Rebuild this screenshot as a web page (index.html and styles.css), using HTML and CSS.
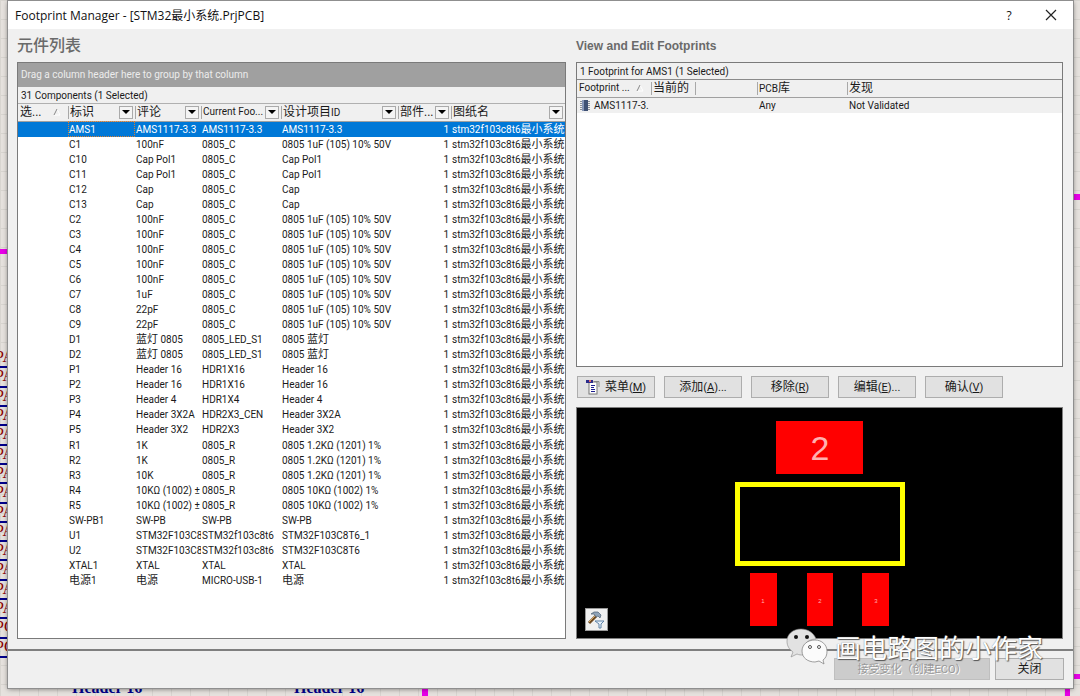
FILE: index.html
```html
<!DOCTYPE html>
<html lang="zh-CN">
<head>
    <meta charset="UTF-8">
    <meta name="viewport" content="width=device-width, initial-scale=1.0">
    <title>Footprint Manager</title>
    <link rel="stylesheet" href="styles.css">
</head>
<body>
    <!-- schematic sheet behind the dialog -->
    <div class="sheet" aria-hidden="true">
        <div class="wire wire-left"></div>
        <div class="wire wire-right"></div>
        <div class="wire wire-right-low"></div>
        <div class="wire wire-down"></div>
        <div class="wire wire-down-right"></div>
        <div class="nets" id="nets"></div>
        <div class="part part-a">Header 16</div>
        <div class="part part-b">Header 16</div>
    </div>

    <div class="dialog">
        <div class="titlebar">
            <span class="title">Footprint Manager - [STM32最小系统.PrjPCB]</span>
            <button class="title-button" aria-label="Help">?</button>
            <button class="title-button" aria-label="Close">
                <svg width="12" height="12" viewBox="0 0 12 12"><path d="M1 1L11 11M11 1L1 11" stroke="#222" stroke-width="1.2"/></svg>
            </button>
        </div>

        <div class="content">
            <div class="column">
                <h2 class="heading-cn">元件列表</h2>
                <div class="panel">
                    <div class="group-bar">Drag a column header here to group by that column</div>
                    <div class="caption">31 Components (1 Selected)</div>
                    <table class="grid components">
                        <colgroup>
                            <col class="c-sel"><col class="c-des"><col class="c-com"><col class="c-foot"><col class="c-item"><col class="c-part"><col>
                        </colgroup>
                        <thead>
                            <tr>
                                <th><div class="head"><span>选...</span><svg class="sort" width="8" height="8" viewBox="0 0 8 8"><path d="M4 1L7 7H1" fill="none" stroke="#fff"/><path d="M1 7L4 1" stroke="#888"/></svg></div></th>
                                <th><div class="head"><span>标识</span><button class="drop" aria-label="Filter 标识"></button></div></th>
                                <th><div class="head"><span>评论</span><button class="drop" aria-label="Filter 评论"></button></div></th>
                                <th><div class="head"><span class="latin">Current Foo...</span><button class="drop" aria-label="Filter Current Footprint"></button></div></th>
                                <th><div class="head"><span>设计项目<span class="latin">ID</span></span><button class="drop" aria-label="Filter 设计项目ID"></button></div></th>
                                <th><div class="head"><span>部件...</span><button class="drop" aria-label="Filter 部件"></button></div></th>
                                <th><div class="head"><span>图纸名</span><button class="drop" aria-label="Filter 图纸名"></button></div></th>
                            </tr>
                        </thead>
                        <tbody id="components"></tbody>
                    </table>
                </div>
            </div>

            <div class="column">
                <h2 class="heading-en">View and Edit Footprints</h2>
                <div class="panel">
                    <div class="caption caption-line">1 Footprint for AMS1 (1 Selected)</div>
                    <table class="grid footprints">
                        <colgroup>
                            <col class="f-name"><col class="f-cur"><col class="f-gap"><col class="f-lib"><col>
                        </colgroup>
                        <thead>
                            <tr>
                                <th><div class="head"><span class="latin">Footprint ...</span><svg class="sort" width="8" height="8" viewBox="0 0 8 8"><path d="M4 1L7 7H1" fill="none" stroke="#fff"/><path d="M1 7L4 1" stroke="#888"/></svg></div></th>
                                <th>当前的</th>
                                <th></th>
                                <th><span class="latin">PCB</span>库</th>
                                <th>发现</th>
                            </tr>
                        </thead>
                        <tbody>
                            <tr>
                                <td><div class="foot-name"><svg width="12" height="13" viewBox="0 0 12 13"><path d="M1 2.500H11M1 4.500H11M1 6.500H11M1 8.500H11M1 10.500H11" stroke="#8a8f99"/><rect x="3" y="1" width="6" height="11" fill="#3f5174"/><rect x="3" y="1" width="2" height="11" fill="#8797b8"/></svg>AMS1117-3.</div></td>
                                <td></td>
                                <td></td>
                                <td>Any</td>
                                <td>Not Validated</td>
                            </tr>
                        </tbody>
                    </table>
                </div>

                <div class="actions">
                    <button class="button">
                        <svg width="14" height="16" viewBox="0 0 14 16">
                            <rect x="3" y="3" width="8" height="12" fill="#fff" stroke="#777"/>
                            <rect x="0" y="1" width="7" height="3" fill="#2b2b8c"/>
                            <rect x="3" y="1" width="2" height="2" fill="#e06a6a"/>
                            <path d="M8 2.500H13V5M13 5V8" stroke="#888" fill="none"/>
                            <path d="M5 6.500H9M5 8.500H8M5 10.500H9M5 12.500H9" stroke="#1e1e90"/>
                        </svg>
                        <span>菜单<span class="key">(<u>M</u>)</span></span>
                    </button>
                    <button class="button"><span>添加<span class="key">(<u>A</u>)...</span></span></button>
                    <button class="button"><span>移除<span class="key">(<u>R</u>)</span></span></button>
                    <button class="button"><span>编辑<span class="key">(<u>E</u>)...</span></span></button>
                    <button class="button"><span>确认<span class="key">(<u>V</u>)</span></span></button>
                </div>

                <div class="preview">
                    <svg class="footprint" width="170" height="206" viewBox="0 0 170 206">
                        <g fill="#f00">
                            <rect x="41" y="0" width="87" height="53"/>
                            <rect x="15" y="152" width="27" height="53"/>
                            <rect x="72" y="152" width="26" height="53"/>
                            <rect x="127" y="152" width="27" height="53"/>
                        </g>
                        <rect x="2.500" y="63.500" width="165" height="79" fill="none" stroke="#ff0" stroke-width="5"/>
                        <text class="pad-big" x="85" y="39">2</text>
                        <text class="pad" x="28" y="182">1</text>
                        <text class="pad" x="85" y="182">2</text>
                        <text class="pad" x="141" y="182">3</text>
                    </svg>
                    <button class="tool" aria-label="Preview options">
                        <svg width="19" height="19" viewBox="0 0 19 19">
                            <path d="M2 13L9 6" stroke="#6d4a22" stroke-width="3"/>
                            <path d="M2 12L8 6" stroke="#d9a860"/>
                            <path d="M4 4L7 2H11L14 5L13 8L11 6L9 7L7 4Z" fill="#8fa3b8" stroke="#4c6074" stroke-width=".7"/>
                            <path d="M8 11H17L14 14V18H12V14Z" fill="#e8f1fa" stroke="#5f83a8"/>
                        </svg>
                    </button>
                </div>
            </div>
        </div>

        <div class="footer">
            <button class="button apply" disabled>接受变化（创建ECO）</button>
            <button class="button close">关闭</button>
        </div>

        <div class="watermark">
            <svg width="42" height="37" viewBox="0 0 42 37">
                <path d="M15 1C7 1 1 6 1 13C1 18 3 21 7 24L5 29L11 26C13 27 15 27 17 27C15 18 21 11 30 11C28 5 22 1 15 1Z" fill="#e2e2e2" stroke="#888" stroke-width=".6"/>
                <circle cx="10" cy="9" r="2" fill="#111"/><circle cx="21" cy="9" r="2" fill="#111"/>
                <path d="M29 12C21 12 16 17 16 23C16 30 22 34 29 34L33 33L38 36L37 32C40 30 41 27 41 23C41 17 36 12 29 12Z" fill="#fbfbfb" stroke="#888" stroke-width=".8"/>
                <circle cx="24" cy="19" r="1.500" fill="#fff" stroke="#555"/><circle cx="33" cy="19" r="1.500" fill="#fff" stroke="#555"/>
            </svg>
            <span>画电路图的小作家</span>
        </div>
    </div>

    <script src="script.js"></script>
</body>
</html>
```
FILE: styles.css
```css
* {
    box-sizing: border-box;
}
body {
    margin: 0;
    padding: 1px 7px 8px 8px;
    height: 100vh;
    position: relative;
    overflow: hidden;
    font-family: Roboto, "Noto Sans CJK SC", sans-serif;
    font-size: 10px;
    line-height: 15px;
    color: #1a1a1a;
    background-color: #e6e2de;
    background-image: linear-gradient(#d8d5d0 1px, transparent 1px), linear-gradient(90deg, #d8d5d0 1px, transparent 1px);
    background-size: 19px 19px;
}
button {
    font: inherit;
    color: inherit;
    padding: 0;
}

/* sheet */
.wire {
    position: absolute;
    background: #e800e8;
}
.wire-left {
    left: 0;
    top: 249px;
    width: 7px;
    height: 5px;
}
.wire-right {
    right: 0;
    top: 194px;
    width: 8px;
    height: 6px;
}
.wire-right-low {
    right: 0;
    bottom: 17px;
    width: 8px;
    height: 5px;
}
.wire-down {
    left: 422px;
    bottom: 0;
    width: 6px;
    height: 8px;
}
.wire-down-right {
    right: 10px;
    bottom: 0;
    width: 5px;
    height: 8px;
}
.nets {
    position: absolute;
    left: 0;
    top: 349px;
    width: 7px;
    height: 309px;
    display: flex;
    flex-direction: column;
    overflow: hidden;
}
.net {
    flex: 1;
    border-bottom: 2px solid #00008b;
    color: #8b0000;
    font: 16px/16px "Liberation Serif", serif;
    text-indent: -5px;
    white-space: nowrap;
}
.part {
    position: absolute;
    bottom: 0;
    color: #00008b;
    font: bold 16px/16px "Liberation Serif", serif;
}
.part-a {
    left: 72px;
}
.part-b {
    left: 294px;
}

/* dialog */
.dialog {
    position: relative;
    height: 100%;
    display: flex;
    flex-direction: column;
    background: #f0f0f0;
    outline: 1px solid #8f8f8f;
    box-shadow: 0 1px 5px rgba(0, 0, 0, 0.5);
}
.titlebar {
    display: flex;
    align-items: center;
    height: 28px;
    padding: 0 8px 0 7px;
    background: #fff;
    font-family: "Open Sans", "Noto Sans CJK SC", sans-serif;
    font-size: 12px;
    color: #111;
}
.title {
    flex: 1;
}
.title-button {
    display: flex;
    align-items: center;
    justify-content: center;
    width: 28px;
    height: 24px;
    margin-left: 14px;
    border: none;
    background: none;
}
.content {
    flex: 1;
    min-height: 0;
    display: grid;
    grid-template-columns: 549fr 487fr;
    gap: 10px;
    padding: 0 10px 10px 9px;
    border-bottom: 2px solid #7f7f7f;
}
.column {
    display: flex;
    flex-direction: column;
    min-width: 0;
    min-height: 0;
}
h2 {
    margin: 0;
    height: 33px;
    line-height: 34px;
    color: #6a6a6a;
}
.heading-cn {
    font-size: 16px;
    font-weight: 500;
}
.heading-en {
    font-family: "Liberation Sans", sans-serif;
    font-size: 12px;
    font-weight: bold;
}
.panel {
    flex: 1;
    min-height: 0;
    border: 1px solid #7a7a7a;
    background: #fff;
    overflow: hidden;
}
.group-bar {
    height: 24px;
    padding: 0 3px;
    line-height: 24px;
    background: #a0a0a0;
    color: #ececec;
}
.caption {
    height: 17px;
    padding: 0 3px;
    line-height: 17px;
    background: #f0f0f0;
    border-bottom: 1px solid #b0b0b0;
}
.caption-line {
    border-color: #8a8a8a;
}

/* tables */
.grid {
    width: 100%;
    table-layout: fixed;
    border-collapse: collapse;
}
.components {
    height: 484px;
}
.grid th {
    height: 17px;
    padding: 0 2px;
    background: #f0f0f0;
    border-bottom: 1px solid #a0a0a0;
    font-size: 12px;
    font-weight: normal;
    text-align: left;
    white-space: nowrap;
    overflow: hidden;
}
.grid th + th {
    background-image: linear-gradient(#a8a8a8, #a8a8a8);
    background-size: 1px 13px;
    background-position: 0 2px;
    background-repeat: no-repeat;
}
.grid td {
    height: 15px;
    padding: 0 0 0 1px;
    line-height: 15px;
    white-space: nowrap;
    overflow: hidden;
}
.latin {
    font-size: 10px;
}
.han {
    font-size: 11px;
    line-height: 10px;
}
.c-sel {
    width: 50px;
}
.c-des {
    width: 67px;
}
.c-com {
    width: 66px;
}
.c-foot {
    width: 80px;
}
.c-item {
    width: 117px;
}
.c-part {
    width: 53px;
}
.f-name {
    width: 74px;
}
.f-cur {
    width: 44px;
}
.f-gap {
    width: 62px;
}
.f-lib {
    width: 90px;
}
.head {
    display: flex;
    align-items: center;
    justify-content: space-between;
    height: 16px;
    line-height: 16px;
}
.sort {
    margin-right: 5px;
}
.drop {
    flex: none;
    width: 14px;
    height: 13px;
    border: 1px solid #aaa;
    background: #f4f4f4;
    display: flex;
    align-items: center;
    justify-content: center;
}
.drop::before {
    content: "";
    border: 4px solid transparent;
    border-top-color: #000;
    border-bottom: none;
}
.components td:nth-child(6) {
    text-align: right;
    padding-right: 2px;
}
.components .selected {
    background: #0078d7;
    color: #fff;
}
.components .selected td:nth-child(2) {
    outline: 1px dotted #d98032;
    outline-offset: -1px;
}
.footprints tbody tr {
    background: #f0f0f0;
}
.footprints td {
    padding-left: 2px;
}
.foot-name {
    display: flex;
    align-items: center;
    gap: 3px;
}
.foot-name svg {
    flex: none;
}

/* buttons */
.actions {
    display: flex;
    gap: 9px;
    padding: 9px 1px;
}
.button {
    display: flex;
    align-items: center;
    justify-content: center;
    gap: 5px;
    width: 78px;
    height: 22px;
    border: 1px solid #adadad;
    background: #e1e1e1;
    font-size: 12px;
}
.button > svg {
    flex: none;
}
.key {
    font-size: 11px;
}
.preview {
    position: relative;
    display: flex;
    justify-content: center;
    height: 232px;
    padding-top: 13px;
    border: 1px solid #808080;
    background: #000;
}
.pad-big,
.pad {
    fill: #ffb0b0;
    font-family: "Liberation Sans", sans-serif;
    font-size: 34px;
    text-anchor: middle;
}
.pad {
    font-size: 6px;
}
.tool {
    position: absolute;
    left: 8px;
    bottom: 7px;
    width: 23px;
    height: 23px;
    display: flex;
    align-items: center;
    justify-content: center;
    border: 1px solid #999;
    background: #f0f0f0;
}
.footer {
    display: flex;
    justify-content: flex-end;
    gap: 5px;
    height: 37px;
    padding: 7px 9px;
}
.apply {
    width: 156px;
    background: #ccc;
    border-color: #bfbfbf;
    color: #999;
    font-size: 11px;
    text-shadow: 1px 1px 0 #fff;
}
.close {
    width: 69px;
}

.watermark {
    position: absolute;
    right: 30px;
    bottom: 23px;
    display: flex;
    align-items: center;
    gap: 7px;
    pointer-events: none;
    font-family: "Noto Sans CJK SC", sans-serif;
    font-size: 26px;
    line-height: 36px;
    color: #fff;
    text-shadow: 1px 1px 1px #555, 0 0 1px #777;
}
```
FILE: script.js
```js
const cap = '0805 1uF (105) 10% 50V';
const rows = [
    ['AMS1', 'AMS1117-3.3', 'AMS1117-3.3', 'AMS1117-3.3'],
    ['C1', '100nF', '0805_C', cap],
    ['C10', 'Cap Pol1', '0805_C', 'Cap Pol1'],
    ['C11', 'Cap Pol1', '0805_C', 'Cap Pol1'],
    ['C12', 'Cap', '0805_C', 'Cap'],
    ['C13', 'Cap', '0805_C', 'Cap'],
    ['C2', '100nF', '0805_C', cap],
    ['C3', '100nF', '0805_C', cap],
    ['C4', '100nF', '0805_C', cap],
    ['C5', '100nF', '0805_C', cap],
    ['C6', '100nF', '0805_C', cap],
    ['C7', '1uF', '0805_C', cap],
    ['C8', '22pF', '0805_C', cap],
    ['C9', '22pF', '0805_C', cap],
    ['D1', '蓝灯 0805', '0805_LED_S1', '0805 蓝灯'],
    ['D2', '蓝灯 0805', '0805_LED_S1', '0805 蓝灯'],
    ['P1', 'Header 16', 'HDR1X16', 'Header 16'],
    ['P2', 'Header 16', 'HDR1X16', 'Header 16'],
    ['P3', 'Header 4', 'HDR1X4', 'Header 4'],
    ['P4', 'Header 3X2A', 'HDR2X3_CEN', 'Header 3X2A'],
    ['P5', 'Header 3X2', 'HDR2X3', 'Header 3X2'],
    ['R1', '1K', '0805_R', '0805 1.2KΩ (1201) 1%'],
    ['R2', '1K', '0805_R', '0805 1.2KΩ (1201) 1%'],
    ['R3', '10K', '0805_R', '0805 1.2KΩ (1201) 1%'],
    ['R4', '10KΩ (1002) ±', '0805_R', '0805 10KΩ (1002) 1%'],
    ['R5', '10KΩ (1002) ±', '0805_R', '0805 10KΩ (1002) 1%'],
    ['SW-PB1', 'SW-PB', 'SW-PB', 'SW-PB'],
    ['U1', 'STM32F103C8T6', 'STM32f103c8t6', 'STM32F103C8T6_1'],
    ['U2', 'STM32F103C8T6', 'STM32f103c8t6', 'STM32F103C8T6'],
    ['XTAL1', 'XTAL', 'XTAL', 'XTAL'],
    ['电源1', '电源', 'MICRO-USB-1', '电源']
];

// Chinese runs are set one size larger than the Latin text beside them
function withHan(text) {
    return text.replace(/[\u4e00-\u9fff]+/g, '<span class="han">$&</span>');
}

const body = document.getElementById('components');
rows.forEach((row, i) => {
    const tr = body.insertRow();
    if (i === 0) {
        tr.className = 'selected';
    }
    ['', ...row, '1', 'stm32f103c8t6最小系统'].forEach(text => {
        tr.insertCell().innerHTML = withHan(text);
    });
});

const nets = document.getElementById('nets');
for (let i = 0; i < 16; i++) {
    const net = document.createElement('div');
    net.className = 'net';
    net.textContent = i < 14 ? 'PA' : 'PC';
    nets.appendChild(net);
}
```
